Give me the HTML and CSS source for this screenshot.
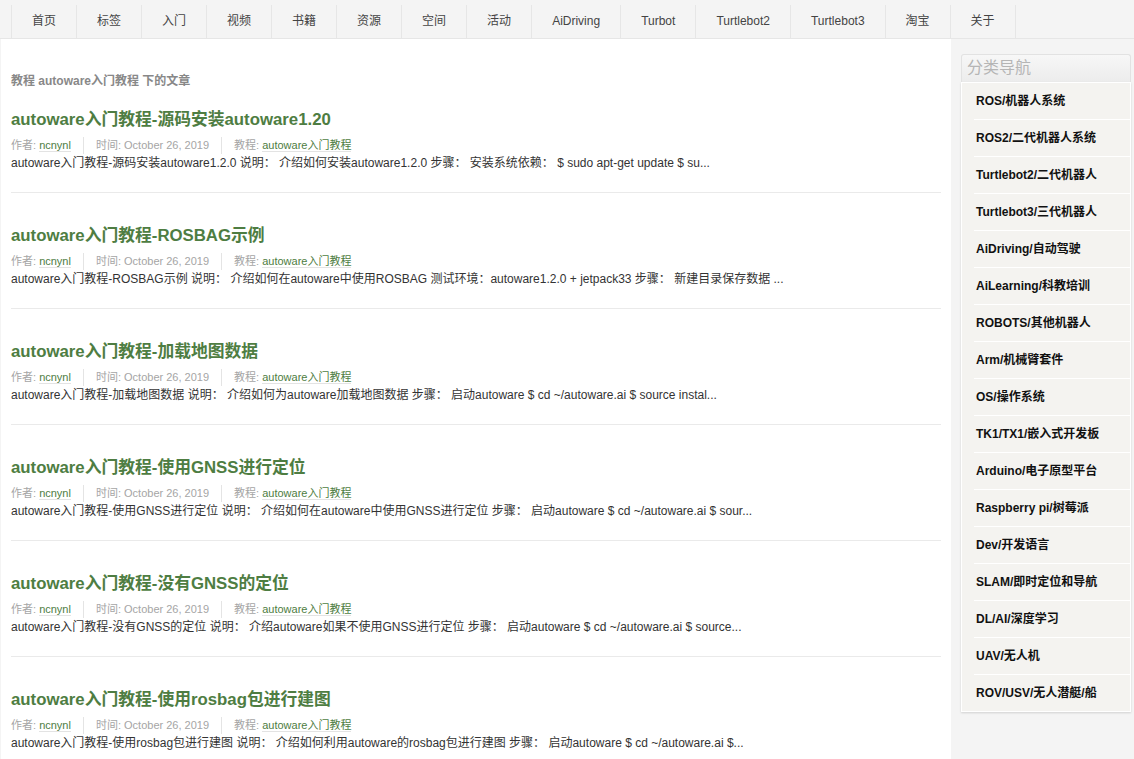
FILE: index.html
```html
<!DOCTYPE html>
<html lang="zh-CN">
<head>
    <meta charset="UTF-8">
    <title>教程 autoware入门教程 下的文章</title>
    <link rel="stylesheet" href="styles.css">
</head>
<body>

<div class="topnav">
    <ul class="menu">
        <li><a href="#">首页</a></li>
        <li><a href="#">标签</a></li>
        <li><a href="#">入门</a></li>
        <li><a href="#">视频</a></li>
        <li><a href="#">书籍</a></li>
        <li><a href="#">资源</a></li>
        <li><a href="#">空间</a></li>
        <li><a href="#">活动</a></li>
        <li><a href="#">AiDriving</a></li>
        <li><a href="#">Turbot</a></li>
        <li><a href="#">Turtlebot2</a></li>
        <li><a href="#">Turtlebot3</a></li>
        <li><a href="#">淘宝</a></li>
        <li><a href="#">关于</a></li>
    </ul>
</div>

<div class="wrap">
    <div class="main">
        <h3 class="archive-title">教程 autoware入门教程 下的文章</h3>

        <div class="post">
            <h2 class="post-title"><a href="#">autoware入门教程-源码安装autoware1.20</a></h2>
            <div class="meta">
                <span>作者: <a href="#">ncnynl</a></span>
                <span>时间: October 26, 2019</span>
                <span>教程: <a href="#">autoware入门教程</a></span>
            </div>
            <p class="excerpt">autoware入门教程-源码安装autoware1.2.0 说明： 介绍如何安装autoware1.2.0 步骤： 安装系统依赖： $ sudo apt-get update $ su...</p>
        </div>

        <div class="post">
            <h2 class="post-title"><a href="#">autoware入门教程-ROSBAG示例</a></h2>
            <div class="meta">
                <span>作者: <a href="#">ncnynl</a></span>
                <span>时间: October 26, 2019</span>
                <span>教程: <a href="#">autoware入门教程</a></span>
            </div>
            <p class="excerpt">autoware入门教程-ROSBAG示例 说明： 介绍如何在autoware中使用ROSBAG 测试环境：autoware1.2.0 + jetpack33 步骤： 新建目录保存数据 ...</p>
        </div>

        <div class="post">
            <h2 class="post-title"><a href="#">autoware入门教程-加载地图数据</a></h2>
            <div class="meta">
                <span>作者: <a href="#">ncnynl</a></span>
                <span>时间: October 26, 2019</span>
                <span>教程: <a href="#">autoware入门教程</a></span>
            </div>
            <p class="excerpt">autoware入门教程-加载地图数据 说明： 介绍如何为autoware加载地图数据 步骤： 启动autoware $ cd ~/autoware.ai $ source instal...</p>
        </div>

        <div class="post">
            <h2 class="post-title"><a href="#">autoware入门教程-使用GNSS进行定位</a></h2>
            <div class="meta">
                <span>作者: <a href="#">ncnynl</a></span>
                <span>时间: October 26, 2019</span>
                <span>教程: <a href="#">autoware入门教程</a></span>
            </div>
            <p class="excerpt">autoware入门教程-使用GNSS进行定位 说明： 介绍如何在autoware中使用GNSS进行定位 步骤： 启动autoware $ cd ~/autoware.ai $ sour...</p>
        </div>

        <div class="post">
            <h2 class="post-title"><a href="#">autoware入门教程-没有GNSS的定位</a></h2>
            <div class="meta">
                <span>作者: <a href="#">ncnynl</a></span>
                <span>时间: October 26, 2019</span>
                <span>教程: <a href="#">autoware入门教程</a></span>
            </div>
            <p class="excerpt">autoware入门教程-没有GNSS的定位 说明： 介绍autoware如果不使用GNSS进行定位 步骤： 启动autoware $ cd ~/autoware.ai $ source...</p>
        </div>

        <div class="post">
            <h2 class="post-title"><a href="#">autoware入门教程-使用rosbag包进行建图</a></h2>
            <div class="meta">
                <span>作者: <a href="#">ncnynl</a></span>
                <span>时间: October 26, 2019</span>
                <span>教程: <a href="#">autoware入门教程</a></span>
            </div>
            <p class="excerpt">autoware入门教程-使用rosbag包进行建图 说明： 介绍如何利用autoware的rosbag包进行建图 步骤： 启动autoware $ cd ~/autoware.ai $...</p>
        </div>
    </div>

    <div class="sidebar">
        <div class="widget">
            <h3 class="widget-title">分类导航</h3>
            <ul class="cat-list">
                <li><a href="#">ROS/机器人系统</a></li>
                <li><a href="#">ROS2/二代机器人系统</a></li>
                <li><a href="#">Turtlebot2/二代机器人</a></li>
                <li><a href="#">Turtlebot3/三代机器人</a></li>
                <li><a href="#">AiDriving/自动驾驶</a></li>
                <li><a href="#">AiLearning/科教培训</a></li>
                <li><a href="#">ROBOTS/其他机器人</a></li>
                <li><a href="#">Arm/机械臂套件</a></li>
                <li><a href="#">OS/操作系统</a></li>
                <li><a href="#">TK1/TX1/嵌入式开发板</a></li>
                <li><a href="#">Arduino/电子原型平台</a></li>
                <li><a href="#">Raspberry pi/树莓派</a></li>
                <li><a href="#">Dev/开发语言</a></li>
                <li><a href="#">SLAM/即时定位和导航</a></li>
                <li><a href="#">DL/AI/深度学习</a></li>
                <li><a href="#">UAV/无人机</a></li>
                <li><a href="#">ROV/USV/无人潜艇/船</a></li>
            </ul>
        </div>
    </div>
</div>

</body>
</html>
```

FILE: styles.css
```css
* {
    box-sizing: border-box;
}

body {
    margin: 0;
    background-color: #f4f4f4;
    font-family: "Liberation Sans", Arial, "Noto Sans CJK SC", sans-serif;
    font-size: 12px;
    color: #333;
}

a {
    text-decoration: none;
}

/* menu */
.topnav {
    padding: 5px 0 0 11px;
    border-bottom: 1px solid #e6e6e6;
}

.menu {
    display: flex;
    margin: 0;
    padding: 0;
    list-style: none;
    border-left: 1px solid #e6e6e6;
    width: max-content;
}

.menu li {
    border-right: 1px solid #e6e6e6;
}

.menu a {
    display: block;
    height: 33px;
    line-height: 33px;
    padding: 0 20px;
    font-size: 12px;
    color: #444;
}

/* layout */
.wrap {
    display: flex;
    align-items: flex-start;
}

.main {
    width: 950px;
    margin-left: 1px;
    padding: 35px 10px 0 10px;
    background-color: #fff;
}

.archive-title {
    margin: 0;
    font-size: 12px;
    line-height: 14px;
    color: #888;
}

.post {
    padding-bottom: 20px;
    border-bottom: 1px solid #eaeaea;
    margin-bottom: 31px;
}

.archive-title + .post {
    margin-top: 20px;
}

.post-title {
    margin: 0;
    font-size: 16.8px;
    line-height: 24px;
}

.post-title a {
    color: #4e7d42;
}

.meta {
    display: flex;
    height: 17px;
    margin-top: 5px;
    line-height: 17px;
    font-size: 11px;
    color: #a5a5a5;
}

.meta span {
    padding: 0 12px;
    border-left: 1px solid #e4e4e4;
}

.meta span:first-child {
    padding-left: 0;
    border-left: none;
}

.meta a {
    color: #4e7d42;
    border-bottom: 1px solid #e3e3e3;
}

.excerpt {
    margin: 0;
    line-height: 18px;
    color: #333;
}

/* sidebar */
.sidebar {
    flex: 1;
    padding: 15px 3px 0 10px;
}

.widget-title {
    margin: 0;
    height: 28px;
    line-height: 26px;
    padding-left: 5px;
    font-size: 16px;
    font-weight: normal;
    color: #b5b5b5;
    border: 1px solid #e2e2e2;
    border-bottom: none;
    border-radius: 3px 3px 0 0;
    background: linear-gradient(#f7f7f7, #ececec);
}

.cat-list {
    margin: 0;
    padding: 0 0 0 12px;
    list-style: none;
    background-color: #f4f3f0;
    border: 1px solid #fff;
    box-shadow: 0 1px 2px rgba(0, 0, 0, 0.15);
}

.cat-list li {
    border-bottom: 1px solid #fff;
}

.cat-list li:last-child {
    border-bottom: none;
}

.cat-list a {
    display: block;
    height: 36px;
    line-height: 36px;
    padding-left: 2px;
    font-weight: bold;
    color: #111;
}
```
